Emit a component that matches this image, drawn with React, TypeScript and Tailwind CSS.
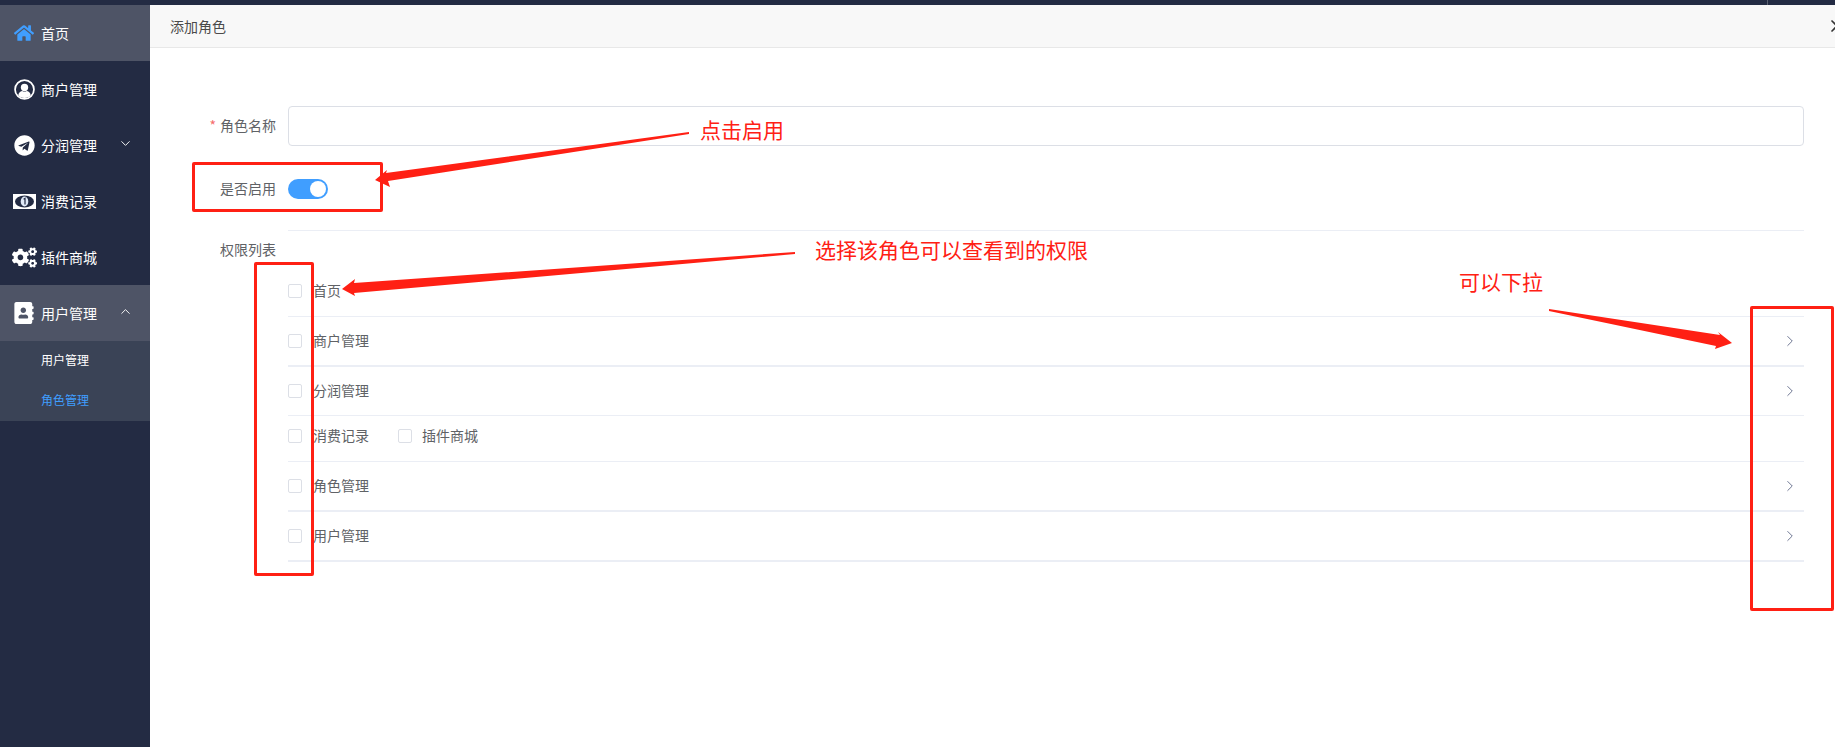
import { ReactNode } from "react";
import { ChevronDown, ChevronRight, ChevronUp, X } from "lucide-react";
import { FaAddressBook, FaCogs, FaHome, FaTelegram } from "react-icons/fa";

const FONT = "font-['Noto_Sans_CJK_SC','Noto_Sans',sans-serif]";

type MenuItem = {
  label: string;
  icon: ReactNode;
  active?: boolean;
  arrow?: "up" | "down";
};

const UserIcon = () => (
  <svg width={21} height={21} viewBox="0 0 24 24" fill="none">
    <circle cx="12" cy="12" r="10.8" stroke="#fff" strokeWidth="2" />
    <circle cx="12" cy="9.6" r="4.2" fill="#fff" />
    <path d="M4.8 18.6c.6-3.6 3.2-5 4.6-5 .8.5 1.6.8 2.6.8s1.8-.3 2.6-.8c1.4 0 4 1.4 4.6 5-1.7 2-4.2 3.2-7.2 3.2s-5.500-1.200-7.200-3.200z" fill="#fff" />
  </svg>
);

const MoneyIcon = () => (
  <svg width={23} height={15} viewBox="0 0 23 15">
    <rect width="23" height="15" fill="#fff" />
    <ellipse cx="11.500" cy="7.500" rx="9.500" ry="6" fill="#232b43" />
    <ellipse cx="11.500" cy="7.500" rx="3.800" ry="5" fill="#dfe9f7" />
    <path d="M10.600 5.200l1.400-.8v6.200" stroke="#232b43" strokeWidth="1.200" fill="none" />
  </svg>
);

const menu: MenuItem[] = [
  { label: "首页", icon: <FaHome className="text-[#409eff]" size={20} />, active: true },
  { label: "商户管理", icon: <UserIcon /> },
  { label: "分润管理", icon: <FaTelegram size={21} />, arrow: "down" },
  { label: "消费记录", icon: <MoneyIcon /> },
  { label: "插件商城", icon: <FaCogs size={25} /> },
  { label: "用户管理", icon: <FaAddressBook size={22} />, active: true, arrow: "up" },
];

const rows = [
  { label: "首页", rowClass: "h-[51px] border-b", expand: false },
  { label: "商户管理", rowClass: "h-[50px] border-b-2", expand: true },
  { label: "分润管理", rowClass: "h-[49px] border-b", expand: true },
  { label: "消费记录", rowClass: "h-[46px] border-b pb-[5px]", expand: false, extra: "插件商城" },
  { label: "角色管理", rowClass: "h-[50px] border-b-2", expand: true },
  { label: "用户管理", rowClass: "h-[50px] border-b-2", expand: true },
];

const Checkbox = () => (
  <span className="block h-[14px] w-[14px] shrink-0 rounded-[2px] border border-[#dcdfe6] bg-white" />
);

const Sidebar = () => (
  <aside className="flex w-[150px] shrink-0 flex-col bg-[#232b43] text-white">
    {menu.map((item) => (
      <div
        key={item.label}
        className={`flex h-14 items-center ${item.active ? "bg-[#4e5466]" : ""}`}
      >
        <span className="flex w-[41px] shrink-0 items-center justify-center pl-[7px]">{item.icon}</span>
        <span className="text-sm">{item.label}</span>
        {item.arrow === "down" && <ChevronDown className="ml-[21px] -mt-[4px]" size={15} strokeWidth={1.5} />}
        {item.arrow === "up" && <ChevronUp className="ml-[21px] -mt-[4px]" size={15} strokeWidth={1.5} />}
      </div>
    ))}
    <div className="flex flex-col bg-[#3a4356] text-xs">
      <div className="flex h-10 items-center pb-[2px] pl-[41px]">用户管理</div>
      <div className="flex h-10 items-center pb-[2px] pl-[41px] text-[#409eff]">角色管理</div>
    </div>
  </aside>
);

const Arrows = () => (
  <svg className="pointer-events-none absolute inset-0" width={1835} height={747} fill="#ff2014">
    <polygon points="689,132 689,134 388,181 390,187 375,180 387,170 386,173" />
    <polygon points="795,252 795,254 354,293 355,296 342,289 355,279 354,283" />
    <polygon points="1549,309 1549,311 1716,346 1715,349 1732,343 1718,332 1720,335" />
  </svg>
);

const Annotations = () => (
  <>
    <div className="absolute left-[192px] top-[162px] h-[50px] w-[191px] rounded-[2px] border-[3px] border-[#ff2014]" />
    <div className="absolute left-[254px] top-[262px] h-[314px] w-[60px] rounded-[2px] border-[3px] border-[#ff2014]" />
    <div className="absolute left-[1750px] top-[306px] h-[305px] w-[84px] rounded-[2px] border-[3px] border-[#ff2014]" />
    <Arrows />
    <span className="absolute left-[700px] top-[114px] text-[21px] leading-[30px] text-[#ff2014]">点击启用</span>
    <span className="absolute left-[815px] top-[234px] text-[21px] leading-[30px] text-[#ff2014]">
      选择该角色可以查看到的权限
    </span>
    <span className="absolute left-[1459px] top-[266px] text-[21px] leading-[30px] text-[#ff2014]">可以下拉</span>
  </>
);

export default function App() {
  return (
    <div className={`relative flex h-[747px] w-[1835px] flex-col overflow-hidden bg-white ${FONT}`}>
      <div className="flex h-[5px] shrink-0 justify-end bg-[#232b43] pr-[67px]">
        <span className="h-full w-px bg-[#5a6070]" />
      </div>
      <div className="flex min-h-0 flex-1">
        <Sidebar />
        <main className="flex min-w-0 flex-1 flex-col">
          <header className="flex h-[43px] shrink-0 items-center justify-between overflow-hidden border-b border-[#e8e8e8] bg-[#f8f8f8] pl-5 text-sm text-[#4a4a4a]">
            <span>添加角色</span>
            <X className="-mr-[12px] text-[#333]" size={20} strokeWidth={2} />
          </header>
          <div className="flex flex-col pr-[31px] pt-[58px] text-sm text-[#606266]">
            <div className="flex h-10 items-center">
              <label className="w-[138px] shrink-0 pb-[2px] pr-3 text-right">
                <span className="mr-1 text-[#f56c6c]">*</span>角色名称
              </label>
              <input
                type="text"
                aria-label="角色名称"
                className="h-10 flex-1 rounded border border-[#dcdfe6] bg-white outline-none"
              />
            </div>
            <div className="mt-[23px] flex h-10 items-center">
              <label className="w-[138px] shrink-0 pb-[2px] pr-3 text-right">是否启用</label>
              <span className="flex h-5 w-10 items-center justify-end rounded-full bg-[#409eff] pr-[2px]">
                <span className="block h-4 w-4 rounded-full bg-white" />
              </span>
            </div>
            <div className="ml-[138px] mt-[21px] h-px bg-[#ebeef5]" />
            <div className="flex h-[35px]">
              <label className="w-[138px] shrink-0 pr-3 pt-[8px] text-right leading-5">权限列表</label>
            </div>
            <div className="ml-[138px] flex flex-col">
              {rows.map((row) => (
                <div key={row.label} className={`flex items-center border-[#ebeef5] ${row.rowClass}`}>
                  <Checkbox />
                  <span className="ml-[11px] pb-[2px]">{row.label}</span>
                  {row.extra && (
                    <>
                      <span className="ml-[29px]">
                        <Checkbox />
                      </span>
                      <span className="ml-[10px] pb-[2px]">{row.extra}</span>
                    </>
                  )}
                  {row.expand && (
                    <ChevronRight className="ml-auto mr-[5px] text-[#6b7390]" size={18} strokeWidth={1.3} />
                  )}
                </div>
              ))}
            </div>
          </div>
        </main>
      </div>
      <Annotations />
    </div>
  );
}
